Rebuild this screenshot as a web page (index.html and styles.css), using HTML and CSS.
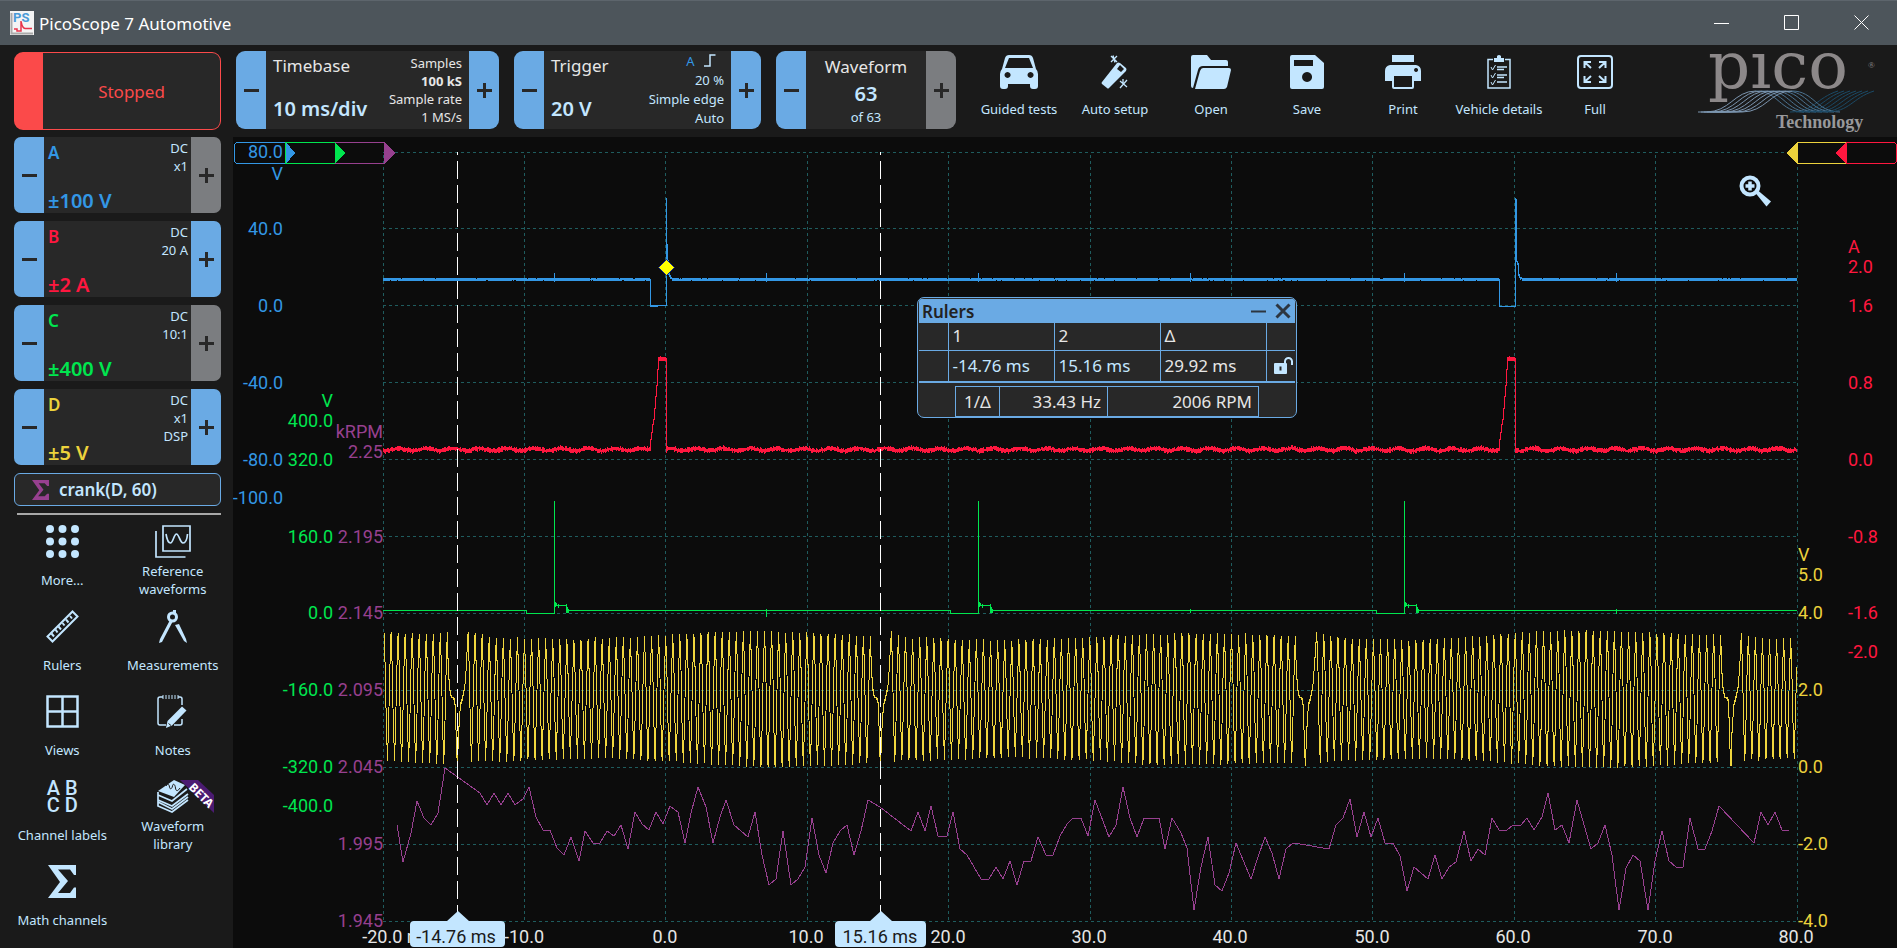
FILE: index.html
```html
<!DOCTYPE html>
<html lang="en">
<head>
<meta charset="utf-8">
<title>PicoScope 7 Automotive</title>
<link rel="stylesheet" href="styles.css">
</head>
<body>
<header class="titlebar">
  <svg class="app-icon" viewBox="0 0 24 24"><rect width="24" height="24" fill="#f4f4f4"/><path d="M1.500 2V22.500H23" fill="none" stroke="#a9a9a9" stroke-width="2"/><text x="3" y="11" class="app-icon-text">PS</text><path d="M4 18h3v2h4V10c1 6 3 8 5 7.500h6" fill="none" stroke="#e8324a" stroke-width="1.500"/></svg>
  <h1 class="app-title">PicoScope 7 Automotive</h1>
  <div class="window-buttons">
    <button class="window-button" aria-label="Minimize"><svg viewBox="0 0 16 16"><path d="M0 8.500H15"/></svg></button>
    <button class="window-button" aria-label="Maximize"><svg viewBox="0 0 16 16"><path d="M.5.5h14v14H.5z"/></svg></button>
    <button class="window-button" aria-label="Close"><svg viewBox="0 0 16 16"><path d="M.5.5l14 14M14.500.5l-14 14"/></svg></button>
  </div>
</header>

<div class="app">
  <aside class="sidebar">
    <button class="run-button">Stopped</button>

    <section class="card channel channel-a">
      <button class="step" aria-label="A range down"><i class="minus"></i></button>
      <div class="channel-body"><b class="channel-name">A</b><b class="channel-range">±100 V</b><p class="channel-info">DC<br>x1</p></div>
      <button class="step step-off" aria-label="A range up"><i class="plus"></i></button>
    </section>
    <section class="card channel channel-b">
      <button class="step" aria-label="B range down"><i class="minus"></i></button>
      <div class="channel-body"><b class="channel-name">B</b><b class="channel-range">±2 A</b><p class="channel-info">DC<br>20 A</p></div>
      <button class="step" aria-label="B range up"><i class="plus"></i></button>
    </section>
    <section class="card channel channel-c">
      <button class="step" aria-label="C range down"><i class="minus"></i></button>
      <div class="channel-body"><b class="channel-name">C</b><b class="channel-range">±400 V</b><p class="channel-info">DC<br>10:1</p></div>
      <button class="step step-off" aria-label="C range up"><i class="plus"></i></button>
    </section>
    <section class="card channel channel-d">
      <button class="step" aria-label="D range down"><i class="minus"></i></button>
      <div class="channel-body"><b class="channel-name">D</b><b class="channel-range">±5 V</b><p class="channel-info">DC<br>x1<br>DSP</p></div>
      <button class="step" aria-label="D range up"><i class="plus"></i></button>
    </section>

    <button class="math-channel"><svg class="sigma-small" viewBox="0 0 28 33"><path d="M0 0H28V10H25L21 5.500H11L19 16 10 27H21L25 22.500H28V33H0L12 17z"/></svg>crank(D, 60)</button>
    <hr class="divider">

    <nav class="tools">
      <button class="tool"><svg class="tool-icon" viewBox="0 0 33 33"><g fill="currentColor"><circle cx="4" cy="4" r="4"/><circle cx="16.500" cy="4" r="4"/><circle cx="29" cy="4" r="4"/><circle cx="4" cy="16.500" r="4"/><circle cx="16.500" cy="16.500" r="4"/><circle cx="29" cy="16.500" r="4"/><circle cx="4" cy="29" r="4"/><circle cx="16.500" cy="29" r="4"/><circle cx="29" cy="29" r="4"/></g></svg><span class="tool-label">More...</span></button>
      <button class="tool"><svg class="tool-icon wide-icon" viewBox="0 0 36 33"><g fill="none" stroke="currentColor" stroke-width="1.700"><path d="M8 1H35V26H8z"/><path d="M1 6V32H30.500"/><path d="M11 9C12 15 13 18 15.500 18S19 9 21.500 9 25 18 28 18s4-3 4.500-9"/></g></svg><span class="tool-label">Reference waveforms</span></button>
      <button class="tool"><svg class="tool-icon" viewBox="0 0 33 33"><g fill="none" stroke="currentColor" stroke-width="2"><path d="M26.500 1.500 31.500 6.500 6.500 31.500 1.500 26.500z"/><path d="M5.500 23.500l2.500 3M9.500 19.500l2 3M12.500 16.500l2.500 3M16.500 13l2 2.500M20 9.500l2.500 3M24 6l2 2.500"/></g></svg><span class="tool-label">Rulers</span></button>
      <button class="tool"><svg class="tool-icon" viewBox="0 0 33 33"><g fill="currentColor"><path d="M14 10 17 11 6 32 3 33 4 29zM19 15l4-1 7 15 1 4-3-2z"/><rect x="17" y="0" width="3" height="4"/></g><circle cx="16.500" cy="7" r="4" fill="none" stroke="currentColor" stroke-width="3"/></svg><span class="tool-label">Measurements</span></button>
      <button class="tool"><svg class="tool-icon" viewBox="0 0 33 33"><path d="M1.500 1.500H31.500V31.500H1.500zM16.500 1V32M1 16.500H32" fill="none" stroke="currentColor" stroke-width="2.500"/></svg><span class="tool-label">Views</span></button>
      <button class="tool"><svg class="tool-icon" viewBox="0 0 33 33"><path d="M7 2H4a2 2 0 0 0-2 2V28a2 2 0 0 0 2 2H10M26 24v4a2 2 0 0 1-2 2h-6M26 10V4a2 2 0 0 0-2-2H22" fill="none" stroke="currentColor" stroke-width="1.500"/><path d="M7 0V4M10 0V4M13 0V4M16 0V4M19 0V4M22 0V4" stroke="currentColor"/><path d="M26 11.500 30.500 15.500 16 30.500 10 33 11.500 26z" fill="currentColor"/><path d="M12.500 28.500l2.500 2" stroke="#1a1a1a"/></svg><span class="tool-label">Notes</span></button>
      <button class="tool"><span class="tool-icon letters">A B<br>C D</span><span class="tool-label">Channel labels</span></button>
      <button class="tool"><svg class="tool-icon ribbon-icon" viewBox="0 0 86 33"><path d="M44 0 55 5 44 17 28 11z" fill="currentColor"/><path d="M36 6C38 3 39 4 39.500 7S42 9 42.500 6 45 4 45.500 8 48 11 50 8" fill="none" stroke="#1a1a1a"/><path d="M28 12v3L42 21 57 9M28 17v3L42 26 58 14M28 12V26L42 32 58 20M28 22 42 29 58 17" fill="none" stroke="currentColor" stroke-width="1.700"/><path d="M50 0H68L84 15V33z" fill="#4b1b72"/><text class="ribbon-text" transform="translate(58 8) rotate(45)">BETA</text></svg><span class="tool-label">Waveform library</span></button>
      <button class="tool"><svg class="tool-icon" viewBox="0 0 28 33"><path fill="currentColor" d="M0 0H28V10H26L22 4.500H10L20 16 10 28H22L26 22.500H28V33H0L12 17z"/></svg><span class="tool-label">Math channels</span></button>
    </nav>
  </aside>

  <div class="topbar">
    <section class="card timebase">
      <button class="step" aria-label="Timebase down"><i class="minus"></i></button>
      <div class="panel"><span class="panel-title">Timebase</span><b class="panel-value">10 ms/div</b></div>
      <p class="panel-info">Samples<br><b>100 kS</b><br>Sample rate<br>1 MS/s</p>
      <button class="step" aria-label="Timebase up"><i class="plus"></i></button>
    </section>
    <section class="card trigger">
      <button class="step" aria-label="Trigger down"><i class="minus"></i></button>
      <div class="panel"><span class="panel-title">Trigger</span><b class="panel-value">20 V</b></div>
      <p class="panel-info spaced"><span class="trigger-source">A <svg class="edge-icon" viewBox="0 0 12 13"><path d="M0 12H6V1H11.500" fill="none" stroke="currentColor" stroke-width="1.500"/></svg></span><br>20 %<br>Simple edge<br>Auto</p>
      <button class="step" aria-label="Trigger up"><i class="plus"></i></button>
    </section>
    <section class="card waveform">
      <button class="step" aria-label="Previous waveform"><i class="minus"></i></button>
      <div class="panel centered"><span class="panel-title">Waveform</span><b class="panel-value">63</b><span class="panel-note">of 63</span></div>
      <button class="step step-off" aria-label="Next waveform"><i class="plus"></i></button>
    </section>

    <nav class="actions">
      <button class="action"><svg class="action-icon" viewBox="0 0 38 34"><path fill="currentColor" fill-rule="evenodd" d="M9 0H29Q32 0 33 3L36 14Q38 16 38 19V31Q38 34 35 34H33Q30 34 30 31V29H8V31Q8 34 5 34H3Q0 34 0 31V19Q0 16 2 14L5 3Q6 0 9 0zM9 3 5 13H33L29 3zM7.500 17a3 3 0 1 0 .1 0zM30.500 17a3 3 0 1 0 .1 0z"/></svg><span class="action-label">Guided tests</span></button>
      <button class="action"><svg class="action-icon" viewBox="0 0 38 34"><path fill="currentColor" fill-rule="evenodd" d="M24 8 30 13Q31 14 30 16L13 33Q12 34 11 33L6 29Q5 28 6 27L21 8Q22 7 24 8zM24 10 21 14 25 17 28 14z"/><path d="M15 1l6 6M21 1l-6 6M17 .5l2 7M24 26l7 6M31 25l-7 8M27 24v4" stroke="currentColor" stroke-width="1.300"/></svg><span class="action-label">Auto setup</span></button>
      <button class="action"><svg class="action-icon" viewBox="0 0 40 34"><path fill="currentColor" d="M0 2Q0 0 2 0H16L20 5H35Q37 5 37 7V11H12Q8 11 7 15L2 33Q0 33 0 31zM12 13H38Q40 13 40 15L36 32Q35 34 33 34H4L9 16Q10 13 12 13z"/></svg><span class="action-label">Open</span></button>
      <button class="action"><svg class="action-icon" viewBox="0 0 34 34"><path fill="currentColor" fill-rule="evenodd" d="M2 0H25L34 8V32Q34 34 32 34H2Q0 34 0 32V2Q0 0 2 0zM4 5V11H23V5zM17 17a5 5 0 1 0 .1 0z"/></svg><span class="action-label">Save</span></button>
      <button class="action"><svg class="action-icon" viewBox="0 0 36 34"><path fill="currentColor" fill-rule="evenodd" d="M7 0H29V7H7zM5 10H31Q36 11 36 16V26H29V32Q29 34 27 34H9Q7 34 7 32V26H0V16Q0 11 5 10zM9 21V32H27V21zM31 13a2 2 0 1 0 .1 0z"/></svg><span class="action-label">Print</span></button>
      <button class="action"><svg class="action-icon" viewBox="0 0 24 34"><path d="M6 4.500H1V33H23V4.500H18M10 12H20M10 14.500H17M10 20H20M10 22.500H17M10 27H20" fill="none" stroke="currentColor" stroke-width="1.500"/><path fill="currentColor" d="M7 3H10V1Q12-1 14 1V3H17V7H7z"/><path d="M4 12l1.500 3 3-5M4 20l1.500 3 3-5M4 27l1.500 3 3-5" fill="none" stroke="currentColor"/></svg><span class="action-label">Vehicle details</span></button>
      <button class="action"><svg class="action-icon" viewBox="0 0 36 34"><g fill="none" stroke="currentColor" stroke-width="2"><rect x="1" y="1" width="34" height="32" rx="3"/><path d="M14 13 8 7.500M7.500 13V7H14M22 13 28 7.500M28.500 13V7H22M14 21 8 26.500M7.500 21V27H14M22 21 28 26.500M28.500 21V27H22"/></g></svg><span class="action-label">Full</span></button>
    </nav>

    <svg class="brand" viewBox="0 0 184 84" role="img" aria-label="pico Technology">
      <text x="10" y="37" class="brand-name">pico</text>
      <text x="170" y="17" class="brand-mark">®</text>
      <g id="brand-waves" fill="none"></g>
      <text x="78" y="77" class="brand-sub">Technology</text>
    </svg>
  </div>

  <main class="scope">
    <svg class="plot" viewBox="233 137 1664 811" preserveAspectRatio="xMinYMin meet">
      <g id="grid" class="grid"></g>
      <g fill="none" class="traces">
        <path id="trace-a" class="line-a" d=""/>
        <path id="trace-b" class="line-b" d=""/>
        <path id="trace-c" class="line-c" d=""/>
        <path id="trace-d" class="line-d" d=""/>
        <polyline class="line-m" points="397,825 403,862 411,833 417,801 424,818 431,825 438,813 445,768 480,793 487,805 494,793 501,805 508,793 515,805 523,799 529,787 536,817 543,830 550,830 557,848 564,855 571,837 579,861 585,831 593,843 600,843 607,831 614,836 621,825 628,849 635,812 642,824 649,830 656,812 663,824 670,806 678,812 685,843 691,813 698,787 706,807 713,843 720,817 726,800 734,825 748,837 755,812 762,855 769,885 776,879 783,831 791,885 798,879 805,867 812,818 819,855 826,873 833,843 840,831 847,825 854,855 861,831 868,800 880,807 911,831 918,812 925,831 931,806 938,836 947,836 953,812 960,849 967,855 981,879 989,879 996,867 1003,879 1010,861 1017,885 1024,861 1031,861 1038,837 1046,855 1053,855 1060,836 1067,824 1073,818 1081,818 1088,836 1095,800 1109,837 1116,825 1123,787 1130,818 1137,837 1144,818 1159,818 1165,849 1172,818 1181,833 1187,848 1194,910 1201,867 1208,837 1215,885 1222,891 1229,873 1236,843 1251,879 1257,860 1265,837 1272,853 1279,879 1286,849 1293,843 1300,844 1329,849 1336,825 1343,818 1350,799 1357,837 1364,812 1371,837 1378,818 1385,843 1393,843 1400,856 1407,891 1414,867 1428,879 1435,855 1442,879 1449,867 1456,862 1464,831 1471,861 1478,849 1485,855 1492,818 1499,830 1507,830 1513,825 1521,825 1527,818 1534,830 1542,817 1548,793 1555,830 1562,825 1569,843 1577,800 1591,849 1598,843 1605,825 1612,855 1619,910 1626,868 1633,855 1640,861 1648,910 1655,861 1662,831 1669,861 1676,867 1683,867 1690,818 1698,849 1705,849 1712,831 1719,806 1754,843 1761,812 1768,825 1775,812 1782,830 1789,830"/>
      </g>
      <path class="ruler" d="M457.500 152V912M880.500 152V912"/>
      <path d="M666.500 259.500l8 8-8 8-8-8z" fill="#ff0" stroke="#0a1a8c"/>

      <g class="tabs">
        <path d="M285 142.500H238Q234.500 142.500 234.500 146V160Q234.500 163.500 238 163.500H285" fill="none" stroke="#3397e5"/>
        <path d="M285.500 142.500H335V163.500H285.500z" fill="none" stroke="#00e64f"/>
        <path d="M335.500 142.500H384V163.500H335.500z" fill="none" stroke="#97408f"/>
        <path d="M286 142v22l9-11z" fill="#3397e5"/><path d="M335 142v22l10-11z" fill="#00e64f"/><path d="M384 142v22l11-11z" fill="#97408f"/>
        <path d="M1797 142.500H1845V163.500H1797z" fill="none" stroke="#ecd23c"/>
        <path d="M1846.500 142.500H1893Q1896.500 142.500 1896.500 146V160Q1896.500 163.500 1893 163.500H1846.500z" fill="none" stroke="#ff173f"/>
        <path d="M1797 142v22l-11-11z" fill="#ecd23c"/><path d="M1846 142v22l-10-11z" fill="#ff173f"/>
      </g>

      <g class="axis axis-a">
        <text x="283" y="158">80.0</text><text x="283" y="180">V</text><text x="283" y="235">40.0</text><text x="283" y="312">0.0</text><text x="283" y="389">-40.0</text><text x="283" y="466">-80.0</text><text x="283" y="504">-100.0</text>
      </g>
      <g class="axis axis-c">
        <text x="333" y="407">V</text><text x="333" y="427">400.0</text><text x="333" y="466">320.0</text><text x="333" y="543">160.0</text><text x="333" y="619">0.0</text><text x="333" y="696">-160.0</text><text x="333" y="773">-320.0</text><text x="333" y="812">-400.0</text>
      </g>
      <g class="axis axis-m">
        <text x="383" y="438">kRPM</text><text x="383" y="458">2.25</text><text x="383" y="543">2.195</text><text x="383" y="619">2.145</text><text x="383" y="696">2.095</text><text x="383" y="773">2.045</text><text x="383" y="850">1.995</text><text x="383" y="927">1.945</text>
      </g>
      <g class="axis axis-d">
        <text x="1798" y="561">V</text><text x="1798" y="581">5.0</text><text x="1798" y="619">4.0</text><text x="1798" y="696">2.0</text><text x="1798" y="773">0.0</text><text x="1798" y="850">-2.0</text><text x="1798" y="927">-4.0</text>
      </g>
      <g class="axis axis-b">
        <text x="1848" y="253">A</text><text x="1848" y="273">2.0</text><text x="1848" y="312">1.6</text><text x="1848" y="389">0.8</text><text x="1848" y="466">0.0</text><text x="1848" y="543">-0.8</text><text x="1848" y="619">-1.6</text><text x="1848" y="658">-2.0</text>
      </g>
      <g class="axis axis-x">
        <text x="397" y="943">-20.0 ms</text><text x="524" y="943">-10.0</text><text x="665" y="943">0.0</text><text x="806" y="943">10.0</text><text x="948" y="943">20.0</text><text x="1089" y="943">30.0</text><text x="1230" y="943">40.0</text><text x="1372" y="943">50.0</text><text x="1513" y="943">60.0</text><text x="1655" y="943">70.0</text><text x="1796" y="943">80.0</text>
      </g>
      <g class="ruler-tag">
        <path d="M414 921H447L458 911 469 921H501Q505 921 505 925V943Q505 947 501 947H414Q410 947 410 943V925Q410 921 414 921z"/>
        <text x="456" y="943">-14.76 ms</text>
        <path d="M839 921H870L881 911 892 921H922Q926 921 926 925V943Q926 947 922 947H839Q835 947 835 943V925Q835 921 839 921z"/>
        <text x="880" y="943">15.16 ms</text>
      </g>
    </svg>

    <button class="zoom-button" aria-label="Zoom in"><svg viewBox="0 0 34 34"><circle cx="12" cy="12" r="8.500" fill="none" stroke="currentColor" stroke-width="4"/><path d="M12 7.500v9M7.500 12h9" stroke="currentColor" stroke-width="3.500"/><path d="M17.500 19 20 16.500 33 27.500 28.500 32.500z" fill="currentColor"/></svg></button>

    <section class="rulers">
      <header class="rulers-head"><h2 class="rulers-title">Rulers</h2>
        <button class="rulers-button" aria-label="Minimize rulers"><svg viewBox="0 0 16 16"><path d="M0 8.500H15" stroke-width="2"/></svg></button>
        <button class="rulers-button" aria-label="Close rulers"><svg viewBox="0 0 16 16"><path d="M1.500 1.500l13 13M14.500 1.500l-13 13" stroke-width="3"/></svg></button>
      </header>
      <table class="rulers-table">
        <colgroup><col class="col-handle"><col class="col-value"><col class="col-value"><col class="col-value"><col class="col-lock"></colgroup>
        <tr class="rulers-names"><td></td><th>1</th><th>2</th><th>Δ</th><td></td></tr>
        <tr class="rulers-values"><td></td><td class="editable">-14.76 ms</td><td class="editable">15.16 ms</td><td>29.92 ms</td><td><svg class="lock-icon" viewBox="0 0 20 18"><rect x="0" y="6" width="13" height="11" rx="1" fill="currentColor"/><path d="M11 6V4.500a3.500 3.500 0 0 1 7 0V8" fill="none" stroke="currentColor" stroke-width="2"/><path d="M6.500 9.500v4" stroke="#282828" stroke-width="2"/></svg></td></tr>
      </table>
      <table class="rate-table"><tr><th>1/Δ</th><td class="rate-hz">33.43 Hz</td><td>2006 RPM</td></tr></table>
    </section>
  </main>
</div>
<script src="chart.js"></script>
</body>
</html>
```
FILE: styles.css
```css
* { box-sizing: border-box; }
body {
  margin: 0;
  height: 100vh;
  display: flex;
  flex-direction: column;
  overflow: hidden;
  background: #1a1a1a;
  color: #e6e6e6;
  font-family: "Noto Sans", "Liberation Sans", sans-serif;
  font-size: 13px;
}
button {
  margin: 0;
  padding: 0;
  border: 0;
  background: none;
  color: #c3e6ff;
  font: inherit;
}
h1, h2, p { margin: 0; }

/* title bar */
.titlebar {
  height: 45px;
  flex: none;
  display: flex;
  align-items: center;
  gap: 5px;
  padding-left: 10px;
  background: #4d555b;
  border-top: 1px solid #5d656c;
}
.app-icon { width: 24px; height: 24px; }
.app-icon-text { font: bold 13px Roboto, sans-serif; fill: #4a9bd8; }
.app-title { flex: 1; font-size: 17px; font-weight: 400; color: #fff; }
.window-buttons { display: flex; }
.window-button {
  width: 70px;
  height: 44px;
  display: grid;
  place-items: center;
}
.window-button svg { width: 16px; height: 16px; fill: none; stroke: #fff; }

/* page frame */
.app {
  flex: 1;
  min-height: 0;
  display: grid;
  grid-template-columns: 233px 1fr;
  grid-template-rows: 92px 1fr;
}
.sidebar { grid-row: 1 / 3; padding: 7px 12px 0 14px; }

.run-button {
  width: 100%;
  height: 78px;
  display: block;
  margin-bottom: 7px;
  border: 1px solid #fb4a4a;
  border-left-width: 29px;
  border-radius: 9px;
  background: #282828;
  color: #fb4a4a;
  font-size: 17px;
}

/* stepped cards */
.card { display: flex; overflow: hidden; background: #282828; border-radius: 9px; }
.step {
  width: 30px;
  flex: none;
  display: grid;
  place-items: center;
  background: #6aaae4;
}
.step-off { background: #7b7d80; }
.minus, .plus {
  width: 15px;
  height: 15px;
  background: linear-gradient(#282828, #282828) center / 15px 3px no-repeat;
}
.plus {
  background:
    linear-gradient(#282828, #282828) center / 15px 3px no-repeat,
    linear-gradient(#282828, #282828) center / 3px 15px no-repeat;
}

.channel { height: 76px; margin-bottom: 8px; border-radius: 7px; }
.channel-body {
  flex: 1;
  display: grid;
  grid-template-columns: 1fr auto;
  grid-template-rows: 1fr auto;
  padding: 2px 3px 0 4px;
}
.channel-name { font-size: 17px; font-weight: 600; line-height: 28px; }
.channel-range { font-size: 20px; font-weight: 600; line-height: 24px; grid-row: 2; }
.channel-info {
  grid-column: 2;
  grid-row: 1 / 3;
  text-align: right;
  line-height: 18px;
  color: #c3e6ff;
}
.channel-a { color: #3397e5; }
.channel-b { color: #ff173f; }
.channel-c { color: #00e64f; }
.channel-d { color: #ecd23c; }

.math-channel {
  width: 100%;
  height: 33px;
  display: flex;
  align-items: center;
  gap: 10px;
  padding-left: 17px;
  background: #282828;
  border: 1px solid #6aaae4;
  border-radius: 6px;
  font-size: 17px;
  font-weight: 600;
}
.sigma-small { width: 17px; height: 20px; fill: #97408f; }
.divider { margin: 7px 0 0 3px; border: 0; border-top: 2px solid #a8a8a8; }

.tools {
  display: grid;
  grid-template-columns: 1fr 1fr;
  gap: 12px 0;
  margin: 10px -7px 0 -7px;
}
.tool { display: flex; flex-direction: column; align-items: center; gap: 4px; }
.tool-icon { height: 33px; flex: none; }
.tool-label {
  height: 36px;
  display: flex;
  align-items: center;
  padding: 0 8px;
  line-height: 18px;
  white-space: nowrap;
}
.tool:nth-child(2) .tool-label, .tool:nth-child(8) .tool-label { white-space: normal; }
.ribbon-icon { width: 86px; }
.ribbon-text { font: bold 12px "Noto Sans", sans-serif; fill: #fff; }
.letters { font: 500 20px/17px Roboto, sans-serif; }

/* top bar */
.topbar { display: flex; align-items: flex-start; padding-top: 6px; }
.topbar .card { height: 78px; }
.timebase { width: 263px; margin-left: 3px; }
.trigger { width: 247px; margin-left: 15px; }
.waveform { width: 180px; margin-left: 15px; }
.panel {
  flex: 1;
  display: flex;
  flex-direction: column;
  justify-content: space-between;
  padding: 2px 7px 7px;
  white-space: nowrap;
}
.panel-title { font-size: 17px; line-height: 26px; }
.panel-value { font-size: 20px; font-weight: 600; line-height: 26px; color: #c3e6ff; }
.panel-info { padding: 3px 7px 0 0; text-align: right; line-height: 18px; white-space: nowrap; }
.spaced { padding-top: 1px; line-height: 19px; color: #c3e6ff; }
.trigger-source { color: #3397e5; }
.edge-icon { width: 12px; height: 13px; margin: 0 8px 0 6px; color: #c3e6ff; vertical-align: -1px; }
.centered { align-items: center; padding: 3px 0 2px; }
.centered .panel-note { line-height: 20px; color: #c3e6ff; }

.actions { display: flex; margin: 4px 0 0 15px; }
.action {
  width: 96px;
  display: flex;
  flex-direction: column;
  align-items: center;
  gap: 10px;
}
.action-icon { height: 34px; }
.action-label { line-height: 20px; white-space: nowrap; }
.brand { width: 184px; height: 84px; margin: 0 15px 0 auto; }
.brand-name { font: 66px "DejaVu Serif", serif; fill: #8c8889; }
.brand-mark { font: 9px "Liberation Serif", serif; fill: #8c8889; }
.brand-sub { font: bold 18px "Liberation Serif", serif; fill: #98989a; }

/* scope view */
.scope { position: relative; min-height: 0; overflow: hidden; background: #0c0c0c; }
.plot { display: block; width: 100%; height: 100%; }
.grid { stroke: #1f5c5e; stroke-dasharray: 3 3; shape-rendering: crispEdges; }
.traces { stroke-width: 1; shape-rendering: crispEdges; }
.line-a { stroke: #3397e5; }
.line-b { stroke: #ff173f; }
.line-c { stroke: #00e64f; }
.line-d { stroke: #f0d63e; }
.line-m { stroke: #97408f; }
.ruler { stroke: #fff; stroke-dasharray: 18 6; stroke-dashoffset: 15; shape-rendering: crispEdges; }
.tabs { shape-rendering: crispEdges; }
.axis, .ruler-tag { font: 18px Roboto, sans-serif; }
.axis-a { fill: #3397e5; text-anchor: end; }
.axis-c { fill: #00e64f; text-anchor: end; }
.axis-m { fill: #97408f; text-anchor: end; }
.axis-b { fill: #ff173f; }
.axis-d { fill: #ecd23c; }
.axis-x { fill: #e6e6e6; text-anchor: middle; }
.ruler-tag path { fill: #c3e6ff; }
.ruler-tag text { fill: #1a1a1a; text-anchor: middle; }
.zoom-button { position: absolute; top: 37px; right: 125px; width: 34px; height: 34px; }

.rulers {
  position: absolute;
  left: 684px;
  top: 160px;
  width: 380px;
  padding: 1px 1px 0;
  background: #282828;
  border: 1px solid #6aaae4;
  border-radius: 7px;
  overflow: hidden;
  font-size: 17px;
}
.rulers-head { height: 24px; display: flex; align-items: center; padding: 0 4px 0 3px; background: #6aaae4; }
.rulers-title { flex: 1; font-size: 17px; font-weight: 600; color: #222; }
.rulers-button { margin-left: 8px; height: 16px; }
.rulers-button svg { width: 16px; height: 16px; stroke: #2d3640; fill: none; display: block; }
.rulers-table { width: 100%; border-collapse: collapse; table-layout: fixed; border-bottom: 2px solid #6aaae4; }
.col-handle { width: 29px; }
.col-value { width: 106px; }
.rulers th, .rulers td { padding: 0 4px; font-weight: 400; text-align: left; border-left: 1px solid #6aaae4; line-height: 24px; white-space: nowrap; }
.rulers-table td:first-child { border-left: 0; }
.rulers-names { height: 27px; }
.rulers-values { height: 32px; border-top: 1px solid #6aaae4; }
.editable { color: #c3e6ff; }
.lock-icon { width: 20px; height: 18px; color: #c3e6ff; display: block; margin-left: 3px; }
.rate-table { width: 304px; height: 31px; margin: 3px 0 0 36px; border-collapse: collapse; border: 1px solid #6aaae4; }
.rulers .rate-table td { text-align: right; padding-right: 6px; }
.rulers .rate-table th { width: 44px; text-align: center; }
.rulers .rate-hz { width: 108px; }
```
FILE: chart.js
```js
// Grid
const gridX = [383, 524, 665, 807, 948, 1090, 1231, 1372, 1514, 1655, 1797];
const gridY = [152, 228, 305, 382, 459, 536, 613, 690, 767, 844, 921];
let grid = "";
for (const x of gridX) grid += `<path d="M${x + 0.5} 155V921"/>`;
for (const y of gridY) grid += `<path d="M383 ${y + 0.5}H1797"/>`;
document.getElementById("grid").innerHTML = grid;

const setPath = (id, d) => document.getElementById(id).setAttribute("d", d);

// Repeatable noise so that every load draws the same trace
let seed = 7;
const noise = () => {
  seed = (seed * 1103515245 + 12345) % 2147483648;
  return seed / 2147483648;
};

// Channel A: supply voltage with injector pulses
let a = "";
for (let x = 383; x < 1797; x++) {
  if ((x >= 650 && x < 672) || (x >= 1499 && x < 1522)) continue;
  const top = noise() < 0.04 ? 279 : 278;
  a += `M${x + 0.5} ${top}V${noise() < 0.04 ? 280 : 281}`;
}
for (const x of [554, 766, 978, 1190, 1404, 1616]) a += `M${x + 0.5} 273V282`;
a += "M650.5 279V306.500M650 305.500H667M650 306.500H658M666.500 306V198M667.500 244V262M668.500 260V275M669.500 273V277M670.500 275V279M671.500 277V279";
a += "M1499.500 279V306.500M1499 306.500H1516M1515.500 306V198M1516.500 199V262M1517.500 261V265M1518.500 263V276M1519.500 274V278M1520.500 277V280M1521.500 277V279";
setPath("trace-a", a);

// Channel B: injector current
let b = "";
for (let x = 383; x < 1797; x++) {
  if ((x > 650 && x < 666) || (x > 1499 && x < 1515)) continue;
  const mid = 449.5 + Math.sin(x / 4.3) * 1.2;
  b += `M${x + 0.5} ${(mid - 1 - noise() * 2).toFixed(1)}V${(mid + 1 + noise() * 2).toFixed(1)}`;
}
for (const x of [650, 1499]) {
  b += `M${x + 0.5} 451V439H${x + 1.5}V432H${x + 2.5}V424H${x + 3.5}V419H${x + 4.5}V408H${x + 5.5}V396H${x + 6.5}V385H${x + 7.5}V369H${x + 8.5}V357`;
  for (let i = 9; i < 16; i++) b += `M${x + i + 0.5} ${i === 10 ? 356 : 357}V361`;
  b += `M${x + 16.5} 358V453`;
}
setPath("trace-b", b);

// Channel C: ignition primary
let c = "M383 610.500";
for (const x of [554, 978, 1404]) {
  c += `H${x - 27.5}V613.500H${x + 0.5}V501V605.500H${x + 4.5}V603.500V607.500V605.500H${x + 12.5}V613V604V612H${x + 14.5}V609V612V610.500`;
  c += `M${x + 1.5} 602V607M${x + 2.5} 603V606M${x + 13.5} 607V612`;
  c += `M${x + 15} 610.500`;
}
c += "H1797M766.500 609V617M1190.500 609V613M1616.500 609V614";
setPath("trace-c", c);

// Channel D: 60-2 crank sensor; limits are [x, crest, trough]
const limits = [
  [383, 633, 760], [447, 634, 763], [468, 632, 760], [490, 638, 760], [560, 640, 757],
  [620, 638, 757], [680, 635, 761], [740, 632, 765], [800, 633, 765], [870, 636, 762],
  [891, 632, 760], [905, 638, 759], [1000, 641, 756], [1080, 638, 758], [1140, 635, 763],
  [1220, 634, 763], [1295, 636, 761], [1316, 633, 761], [1335, 638, 759], [1410, 641, 757],
  [1480, 637, 759], [1540, 632, 765], [1600, 631, 766], [1650, 633, 765], [1720, 636, 760],
  [1741, 634, 759], [1760, 638, 758], [1797, 640, 757]
];
const limit = (x, column) => {
  const next = Math.max(1, limits.findIndex(p => p[0] >= x));
  const [p, q] = [limits[next - 1], limits[next]];
  return p[column] + (q[column] - p[column]) * (x - p[0]) / (q[0] - p[0]);
};
const runs = [[384, 447.3, 9], [468, 870.4, 57], [891.3, 1295.3, 57], [1316.7, 1720.7, 57], [1741.3, 1797.7, 8]];
const pts = [];
runs.forEach(([from, to, teeth], run) => {
  const step = (to - from) / teeth;
  for (let i = 0; i <= teeth; i++) {
    const x = from + i * step;
    if (x > 1797) break;
    const crest = limit(x, 1) + noise() * 2 - 1;
    pts.push([x, crest]);
    if (i < teeth) {
      const trough = limit(x, 2) + noise() * 2 - 1;
      pts.push([x + 1.2, crest + 34], [x + 2.2, trough - 40], [x + 3.5, trough], [x + 4.6, trough - 36], [x + 5.8, crest + 37]);
    }
  }
  if (run < runs.length - 1) {
    const g = to;
    pts.push([g + 1, 670], [g + 2.5, 689], [g + 4, 697], [g + 6, 697], [g + 7.5, 700], [g + 8.3, 717],
      [g + 9.5, 755], [g + 10.3, 765], [g + 11, 736], [g + 13, 705], [g + 15, 698], [g + 17.5, 686], [g + 19, 666]);
  }
});
pts.push([1796.5, 667]);

// The instrument draws one vertical run per pixel column, from lowest to highest value
const columns = new Map();
const mark = (x, y) => {
  const key = Math.floor(x);
  const range = columns.get(key) || [y, y];
  columns.set(key, [Math.min(range[0], y), Math.max(range[1], y)]);
};
for (let i = 1; i < pts.length; i++) {
  const [x0, y0] = pts[i - 1];
  const [x1, y1] = pts[i];
  for (let k = 0; k <= 20; k++) mark(x0 + (x1 - x0) * k / 20, y0 + (y1 - y0) * k / 20);
}
let d = "";
for (const [x, [low, high]] of columns) d += `M${x + 0.5} ${Math.floor(low)}V${Math.ceil(high) + 1}`;
setPath("trace-d", d);

// Brand wave bundle
let waves = "";
for (let i = 0; i < 7; i++) {
  const s = i * 6;
  waves += `<path stroke="#7d96b0" d="M${i * 3} 61H${8 + s}C${32 + s} 61 ${36 + s} 40 ${58 + s} 40"/>`;
  waves += `<path stroke="#4c7391" d="M${58 + s} 40C${80 + s} 40 ${82 + s} 61 ${106 + s} 61"/>`;
  waves += `<path stroke="#1b4a66" d="M${92 + s} 61C${116 + s} 61 ${118 + s} 47 ${140 + s} 40"/>`;
}
document.getElementById("brand-waves").innerHTML = waves;
```
